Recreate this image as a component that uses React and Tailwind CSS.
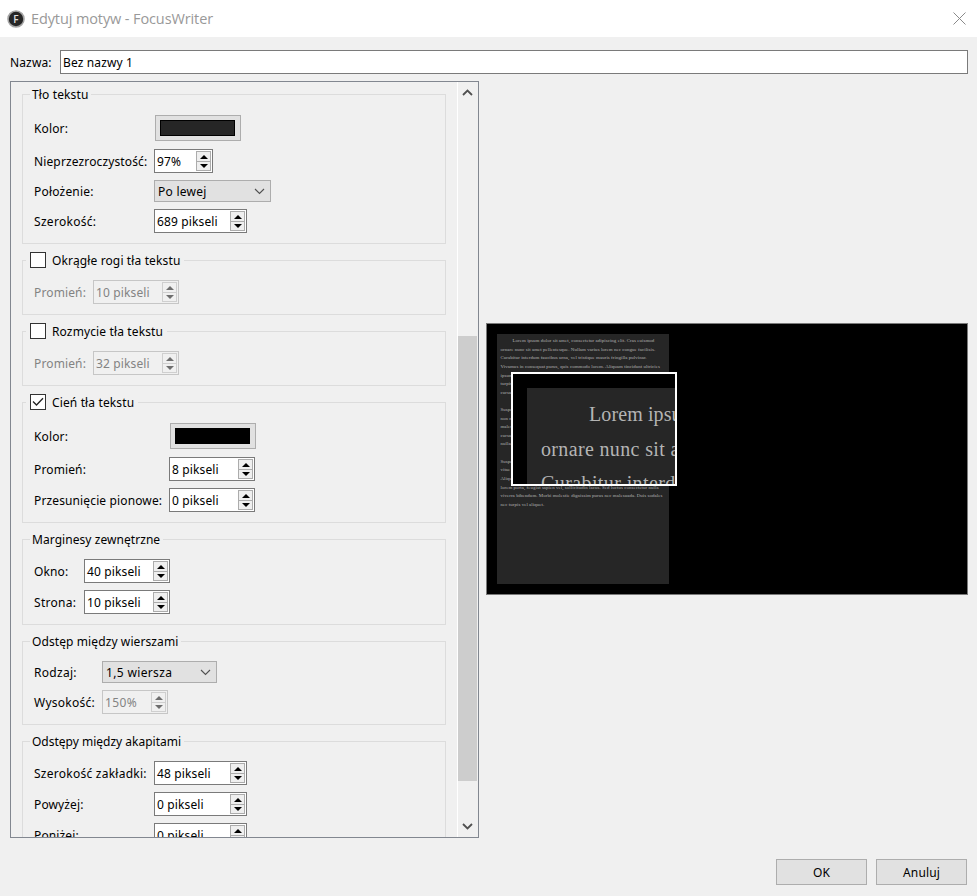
import React from 'react';
import clsx from 'clsx';

const ui = 'font-["Noto_Sans",sans-serif]';

const SpinBox = ({ value, className, disabled }) => (
  <div
    className={clsx(
      'flex h-6 shrink-0 items-center justify-between border py-[2px] pl-[2px] pr-px',
      disabled ? 'border-[#c6c6c6] text-[#838383]' : 'border-[#7a7a7a] bg-white text-black',
      className
    )}
  >
    <span className="whitespace-nowrap pt-[2px]">{value}</span>
    <div
      className={clsx(
        'flex h-[20px] w-[15px] shrink-0 flex-col border',
        disabled ? 'border-[#cfcfcf] text-[#6e6e6e]' : 'border-[#acacac] bg-[#efefef] text-black'
      )}
    >
      <div className={clsx('flex h-[10px] items-center justify-center border-b', disabled ? 'border-[#cfcfcf]' : 'border-[#acacac]')}>
        <svg width="8" height="4" viewBox="0 0 8 4"><path d="M0 4L4 0L8 4Z" fill="currentColor" /></svg>
      </div>
      <div className="flex h-[8px] items-center justify-center">
        <svg width="8" height="4" viewBox="0 0 8 4"><path d="M0 0L4 4L8 0Z" fill="currentColor" /></svg>
      </div>
    </div>
  </div>
);

const ComboBox = ({ value, className }) => (
  <div className={clsx('flex h-[22px] shrink-0 items-center justify-between border border-[#adadad] bg-[#e1e1e1] pl-[3px] pr-[5px]', className)}>
    <span className="whitespace-nowrap pt-[2px]">{value}</span>
    <svg width="11" height="7" viewBox="0 0 11 7" fill="none">
      <path d="M1 1L5.5 5.5L10 1" stroke="#505050" strokeWidth="1.1" />
    </svg>
  </div>
);

const ColorButton = ({ swatch }) => (
  <div className="ml-px h-[26px] w-[86px] shrink-0 border border-[#adadad] bg-[#e1e1e1] p-1">
    <div className={clsx('h-4 w-[75px] border', swatch)} />
  </div>
);

const Row = ({ label, labelWidth, tracking, disabled, children }) => (
  <div className="flex items-center">
    <span className={clsx('shrink-0 whitespace-nowrap pt-[2px]', labelWidth, tracking, disabled && 'text-[#838383]')}>{label}</span>
    {children}
  </div>
);

const Group = ({ title, checkable, checked, className, titleClass, children }) => (
  <fieldset className={clsx('w-[424px] shrink-0 border border-[#dcdcdc] pl-[11px]', className)}>
    <legend
      className={clsx(
        'flex h-[17px] items-start whitespace-nowrap',
        checkable ? '-ml-2 pl-[4px] pr-[4px]' : '-ml-1 pl-[2px] pr-[3px]'
      )}
    >
      {checkable && (
        <span className="mr-[6px] flex h-4 w-4 items-center justify-center border border-[#333] bg-white">
          {checked && (
            <svg width="12" height="10" viewBox="0 0 12 10" fill="none">
              <path d="M1 4.5L4.5 8L11 1.2" stroke="#222" strokeWidth="1.3" />
            </svg>
          )}
        </span>
      )}
      <span className={clsx('leading-[17px]', titleClass)}>{title}</span>
    </legend>
    {children}
  </fieldset>
);

const paragraphs = [
  [
    'Lorem ipsum dolor sit amet, consectetur adipiscing elit. Cras euismod',
    'ornare nunc sit amet pellentesque. Nullam varius lorem nec congue facilisis.',
    'Curabitur interdum faucibus urna, vel tristique mauris fringilla pulvinar.',
    'Vivamus in consequat purus, quis commodo lorem. Aliquam tincidunt ultricies',
    'ipsum',
    'turpis',
    'cursus',
  ],
  ['Suspen', 'non ni', 'malesu', 'cursus', 'nullam'],
  [
    'Suspen',
    'vitae',
    'Aliqua',
    'lorem porta, feugiat sapien vel, sollicitudin lacus. Sed luctus consectetur nulla',
    'viverra bibendum. Morbi molestie dignissim purus nec malesuada. Duis sodales',
    'nec turpis vel aliquet.',
  ],
];

const Preview = () => (
  <div className='relative h-[272px] w-[482px] border border-[#7a7a7a] bg-black pl-[10px] pt-[10px] tracking-normal font-["Liberation_Serif",serif]'>
    <div className="flex h-[250px] w-[172px] flex-col gap-[8.6px] overflow-hidden bg-[#262626] pl-[3.5px] pt-[3px] text-[4.9px] leading-[8.63px] tracking-[0.07px] text-[#b4b4b4]">
      {paragraphs.map((lines, i) => (
        <div key={i}>
          {lines.map((line, j) => (
            <div key={j} className={clsx('whitespace-nowrap', i === 0 && j === 0 && 'pl-[12px]')}>{line}</div>
          ))}
        </div>
      ))}
    </div>
    {/* magnified corner of the page */}
    <div className="absolute left-[24px] top-[48px] h-[114px] w-[166px] overflow-hidden border-2 border-white bg-black pl-[14px] pt-[14px]">
      <div className="h-[110px] w-[160px] whitespace-nowrap bg-[#262626] pl-[14px] pt-[9px] text-[20px] leading-[34.5px] text-[#b4b4b4]">
        <div className="pl-[48px] tracking-[0.1px]">Lorem ipsum</div>
        <div className="tracking-[0.35px]">ornare nunc sit amet</div>
        <div className="tracking-[0.4px]">Curabitur interdum</div>
      </div>
    </div>
  </div>
);

const ScrollBar = () => (
  <div className="flex w-[21px] shrink-0 flex-col items-start border-l border-white bg-[#f0f0f0]">
    <svg className="ml-1 mt-[7px] shrink-0" width="11" height="7" viewBox="0 0 11 7" fill="none">
      <path d="M1 6L5.5 1.5L10 6" stroke="#505050" strokeWidth="1.8" />
    </svg>
    <div className="mt-[240px] h-[445px] w-[19px] shrink-0 bg-[#cdcdcd]" />
    <svg className="ml-1 mt-[42px] shrink-0" width="11" height="7" viewBox="0 0 11 7" fill="none">
      <path d="M1 1L5.5 5.5L10 1" stroke="#505050" strokeWidth="1.8" />
    </svg>
  </div>
);

export default function App() {
  return (
    <div className={clsx('flex h-[896px] w-[977px] flex-col overflow-hidden bg-[#f0f0f0] text-[12px] leading-4 tracking-[0.13px] text-black', ui)}>
      <header className="flex h-[37px] shrink-0 items-center bg-white pl-[7px] pr-[11px]">
        <svg width="18" height="18" viewBox="0 0 18 18">
          <circle cx="9" cy="9" r="8" fill="#262626" stroke="#a5a5a5" strokeWidth="1.6" />
          <text x="9" y="12.5" textAnchor="middle" fontSize="10" fontFamily="Open Sans" fontWeight="600" fill="#e0e0e0">F</text>
        </svg>
        <h1 className='ml-[6px] flex-1 font-["Open_Sans",sans-serif] text-[14.5px] leading-5 tracking-[-0.11px] text-[#999]'>Edytuj motyw - FocusWriter</h1>
        <svg className="-mt-px" width="13" height="13" viewBox="0 0 13 13" fill="none">
          <path d="M0.5 0.5L12.5 12.5M12.5 0.5L0.5 12.5" stroke="#8a8a8a" />
        </svg>
      </header>

      <div className="mt-[13px] flex h-6 shrink-0 items-center pl-[10px] pr-[9px]">
        <span className="w-[50px] pt-[2px]">Nazwa:</span>
        <div className="flex h-6 flex-1 items-center border border-[#7a7a7a] bg-white pl-[2px] pt-[2px]">Bez nazwy 1</div>
      </div>

      <main className="mt-[7px] flex h-[757px] shrink-0 items-start pl-[10px]">
        <div className="flex h-[757px] w-[469px] shrink-0 overflow-hidden border border-[#828790]">
          <div className="flex flex-1 flex-col gap-2 overflow-hidden pl-[11px] pt-1">
            <Group title="Tło tekstu" className="h-[158px]">
              <div className="flex flex-col pt-3">
                <Row label="Kolor:" labelWidth="w-[120px]"><ColorButton swatch="border-black bg-[#262626]" /></Row>
                <div className="mt-2">
                  <Row label="Nieprzezroczystość:" labelWidth="w-[120px]"><SpinBox value="97%" className="w-[59px]" /></Row>
                </div>
                <div className="mt-[7px]">
                  <Row label="Położenie:" labelWidth="w-[120px]" tracking="tracking-[0.2px]"><ComboBox value="Po lewej" className="w-[117px] tracking-[0.25px]" /></Row>
                </div>
                <div className="mt-[7px]">
                  <Row label="Szerokość:" labelWidth="w-[120px]" tracking="tracking-[0.3px]"><SpinBox value="689 pikseli" className="w-[93px]" /></Row>
                </div>
              </div>
            </Group>

            <Group title="Okrągłe rogi tła tekstu" checkable className="h-[63px]">
              <div className="pt-[11px]">
                <Row label="Promień:" labelWidth="w-[59px]" disabled><SpinBox value="10 pikseli" className="w-[86px]" disabled /></Row>
              </div>
            </Group>

            <Group title="Rozmycie tła tekstu" checkable className="h-[63px]">
              <div className="pt-[11px]">
                <Row label="Promień:" labelWidth="w-[59px]" disabled><SpinBox value="32 pikseli" className="w-[86px]" disabled /></Row>
              </div>
            </Group>

            <Group title="Cień tła tekstu" checkable checked className="h-[129px]">
              <div className="pt-3">
                <Row label="Kolor:" labelWidth="w-[135px]"><ColorButton swatch="border-black bg-black" /></Row>
                <div className="mt-2 flex flex-col gap-[7px]">
                  <Row label="Promień:" labelWidth="w-[135px]"><SpinBox value="8 pikseli" className="w-[86px]" /></Row>
                  <Row label="Przesunięcie pionowe:" labelWidth="w-[135px]"><SpinBox value="0 pikseli" className="w-[86px]" /></Row>
                </div>
              </div>
            </Group>

            <Group title="Marginesy zewnętrzne" titleClass="tracking-[0.06px]" className="h-[94px]">
              <div className="flex flex-col gap-[7px] pt-[11px]">
                <Row label="Okno:" labelWidth="w-[50px]"><SpinBox value="40 pikseli" className="w-[86px]" /></Row>
                <Row label="Strona:" labelWidth="w-[50px]" tracking="tracking-[0.3px]"><SpinBox value="10 pikseli" className="w-[86px]" /></Row>
              </div>
            </Group>

            <Group title="Odstęp między wierszami" titleClass="tracking-[0.1px]" className="h-[92px]">
              <div className="flex flex-col gap-[7px] pt-[11px]">
                <Row label="Rodzaj:" labelWidth="w-[68px]" tracking="tracking-[0.3px]"><ComboBox value="1,5 wiersza" className="w-[115px] tracking-[0.35px]" /></Row>
                <Row label="Wysokość:" labelWidth="w-[68px]" tracking="tracking-[0.25px]"><SpinBox value="150%" className="w-[66px] tracking-[0.4px]" disabled /></Row>
              </div>
            </Group>

            <Group title="Odstępy między akapitami" titleClass="tracking-normal" className="h-[130px]">
              <div className="flex flex-col gap-[7px] pt-[11px]">
                <Row label="Szerokość zakładki:" labelWidth="w-[120px]" tracking="tracking-[0.25px]"><SpinBox value="48 pikseli" className="w-[93px]" /></Row>
                <Row label="Powyżej:" labelWidth="w-[120px]"><SpinBox value="0 pikseli" className="w-[93px]" /></Row>
                <Row label="Poniżej:" labelWidth="w-[120px]"><SpinBox value="0 pikseli" className="w-[93px]" /></Row>
              </div>
            </Group>
          </div>
          <ScrollBar />
        </div>
        <div className="ml-[7px] mt-[242px]">
          <Preview />
        </div>
      </main>

      <footer className="mt-[21px] flex h-[26px] justify-end gap-[9px] pr-[10px]">
        <button className="w-[91px] border border-[#adadad] bg-[#e1e1e1] pt-px">OK</button>
        <button className="w-[91px] border border-[#adadad] bg-[#e1e1e1] pt-px">Anuluj</button>
      </footer>
    </div>
  );
}
